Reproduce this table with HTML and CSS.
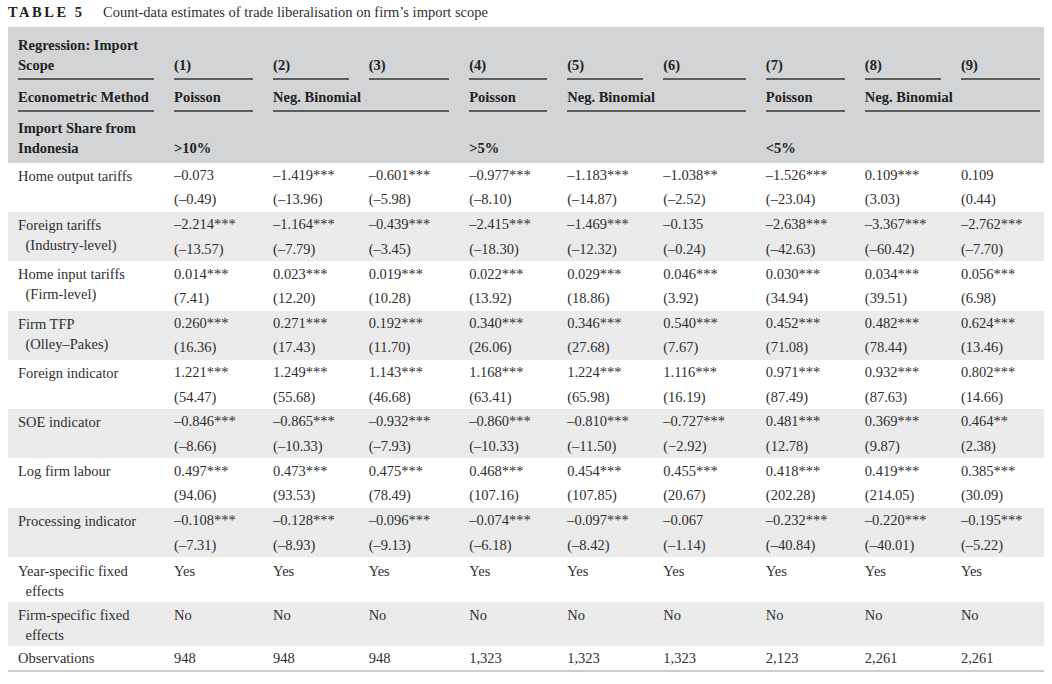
FILE: index.html
```html
<!DOCTYPE html>
<html lang="en">
<head>
<meta charset="utf-8">
<title>Table 5</title>
<link rel="stylesheet" href="styles.css">
</head>
<body>
<div class="page">
  <div class="caption"><span class="tag">TABLE 5</span><span class="ctext">Count-data estimates of trade liberalisation on firm’s import scope</span></div>
  <table class="est">
    <colgroup>
      <col class="c-lab"><col class="c1"><col class="c2"><col class="c3"><col class="c4"><col class="c5"><col class="c6"><col class="c7"><col class="c8"><col class="c9">
    </colgroup>
    <thead>
      <tr class="h1">
        <th><div class="rule">Regression: Import<br>Scope</div></th>
        <th><div class="rule">(1)</div></th>
        <th><div class="rule">(2)</div></th>
        <th><div class="rule">(3)</div></th>
        <th><div class="rule">(4)</div></th>
        <th><div class="rule">(5)</div></th>
        <th><div class="rule">(6)</div></th>
        <th><div class="rule">(7)</div></th>
        <th><div class="rule">(8)</div></th>
        <th class="last"><div class="rule">(9)</div></th>
      </tr>
      <tr class="h2">
        <th><div class="rule">Econometric Method</div></th>
        <th><div class="rule">Poisson</div></th>
        <th colspan="2"><div class="rule">Neg. Binomial</div></th>
        <th><div class="rule">Poisson</div></th>
        <th colspan="2"><div class="rule">Neg. Binomial</div></th>
        <th><div class="rule">Poisson</div></th>
        <th colspan="2" class="last"><div class="rule">Neg. Binomial</div></th>
      </tr>
      <tr class="h3">
        <th><div class="plain">Import Share from<br>Indonesia</div></th>
        <th><div class="plain">&gt;10%</div></th>
        <th></th>
        <th></th>
        <th><div class="plain">&gt;5%</div></th>
        <th></th>
        <th></th>
        <th><div class="plain">&lt;5%</div></th>
        <th></th>
        <th class="last"></th>
      </tr>
    </thead>
    <tbody>
      <tr>
        <td class="lab">Home output tariffs</td>
        <td>–0.073<br>(–0.49)</td>
        <td>–1.419***<br>(–13.96)</td>
        <td>–0.601***<br>(–5.98)</td>
        <td>–0.977***<br>(–8.10)</td>
        <td>–1.183***<br>(–14.87)</td>
        <td>–1.038**<br>(–2.52)</td>
        <td>–1.526***<br>(–23.04)</td>
        <td>0.109***<br>(3.03)</td>
        <td class="last">0.109<br>(0.44)</td>
      </tr>
      <tr class="alt">
        <td class="lab">Foreign tariffs<span class="sub">(Industry-level)</span></td>
        <td>–2.214***<br>(–13.57)</td>
        <td>–1.164***<br>(–7.79)</td>
        <td>–0.439***<br>(–3.45)</td>
        <td>–2.415***<br>(–18.30)</td>
        <td>–1.469***<br>(–12.32)</td>
        <td>–0.135<br>(–0.24)</td>
        <td>–2.638***<br>(–42.63)</td>
        <td>–3.367***<br>(–60.42)</td>
        <td class="last">–2.762***<br>(–7.70)</td>
      </tr>
      <tr>
        <td class="lab">Home input tariffs<span class="sub">(Firm-level)</span></td>
        <td>0.014***<br>(7.41)</td>
        <td>0.023***<br>(12.20)</td>
        <td>0.019***<br>(10.28)</td>
        <td>0.022***<br>(13.92)</td>
        <td>0.029***<br>(18.86)</td>
        <td>0.046***<br>(3.92)</td>
        <td>0.030***<br>(34.94)</td>
        <td>0.034***<br>(39.51)</td>
        <td class="last">0.056***<br>(6.98)</td>
      </tr>
      <tr class="alt">
        <td class="lab">Firm TFP<span class="sub">(Olley–Pakes)</span></td>
        <td>0.260***<br>(16.36)</td>
        <td>0.271***<br>(17.43)</td>
        <td>0.192***<br>(11.70)</td>
        <td>0.340***<br>(26.06)</td>
        <td>0.346***<br>(27.68)</td>
        <td>0.540***<br>(7.67)</td>
        <td>0.452***<br>(71.08)</td>
        <td>0.482***<br>(78.44)</td>
        <td class="last">0.624***<br>(13.46)</td>
      </tr>
      <tr>
        <td class="lab">Foreign indicator</td>
        <td>1.221***<br>(54.47)</td>
        <td>1.249***<br>(55.68)</td>
        <td>1.143***<br>(46.68)</td>
        <td>1.168***<br>(63.41)</td>
        <td>1.224***<br>(65.98)</td>
        <td>1.116***<br>(16.19)</td>
        <td>0.971***<br>(87.49)</td>
        <td>0.932***<br>(87.63)</td>
        <td class="last">0.802***<br>(14.66)</td>
      </tr>
      <tr class="alt">
        <td class="lab">SOE indicator</td>
        <td>–0.846***<br>(–8.66)</td>
        <td>–0.865***<br>(–10.33)</td>
        <td>–0.932***<br>(–7.93)</td>
        <td>–0.860***<br>(–10.33)</td>
        <td>–0.810***<br>(–11.50)</td>
        <td>–0.727***<br>(−2.92)</td>
        <td>0.481***<br>(12.78)</td>
        <td>0.369***<br>(9.87)</td>
        <td class="last">0.464**<br>(2.38)</td>
      </tr>
      <tr>
        <td class="lab">Log firm labour</td>
        <td>0.497***<br>(94.06)</td>
        <td>0.473***<br>(93.53)</td>
        <td>0.475***<br>(78.49)</td>
        <td>0.468***<br>(107.16)</td>
        <td>0.454***<br>(107.85)</td>
        <td>0.455***<br>(20.67)</td>
        <td>0.418***<br>(202.28)</td>
        <td>0.419***<br>(214.05)</td>
        <td class="last">0.385***<br>(30.09)</td>
      </tr>
      <tr class="alt">
        <td class="lab">Processing indicator</td>
        <td>–0.108***<br>(–7.31)</td>
        <td>–0.128***<br>(–8.93)</td>
        <td>–0.096***<br>(–9.13)</td>
        <td>–0.074***<br>(–6.18)</td>
        <td>–0.097***<br>(–8.42)</td>
        <td>–0.067<br>(–1.14)</td>
        <td>–0.232***<br>(–40.84)</td>
        <td>–0.220***<br>(–40.01)</td>
        <td class="last">–0.195***<br>(–5.22)</td>
      </tr>
      <tr class="fx">
        <td class="lab">Year-specific fixed<span class="sub">effects</span></td>
        <td>Yes</td><td>Yes</td><td>Yes</td><td>Yes</td><td>Yes</td><td>Yes</td><td>Yes</td><td>Yes</td><td class="last">Yes</td>
      </tr>
      <tr class="fx alt">
        <td class="lab">Firm-specific fixed<span class="sub">effects</span></td>
        <td>No</td><td>No</td><td>No</td><td>No</td><td>No</td><td>No</td><td>No</td><td>No</td><td class="last">No</td>
      </tr>
      <tr class="obs">
        <td class="lab">Observations</td>
        <td>948</td><td>948</td><td>948</td><td>1,323</td><td>1,323</td><td>1,323</td><td>2,123</td><td>2,261</td><td class="last">2,261</td>
      </tr>
    </tbody>
  </table>
</div>
</body>
</html>
```
FILE: styles.css
```css
html, body {
  margin: 0;
  padding: 0;
  background: #ffffff;
}

body {
  font-family: "Liberation Serif", "Times New Roman", serif;
  color: #2f2f2f;
}

.page {
  padding: 4px 8px 0 8px;
}

.caption {
  font-size: 14.5px;
  line-height: 16px;
  height: 16px;
  margin-bottom: 7.3px;
  white-space: nowrap;
}

.caption .tag {
  font-weight: bold;
  letter-spacing: 2.5px;
  margin-right: 18.5px;
  color: #222222;
}

.est {
  width: 1036px;
  table-layout: fixed;
  border-collapse: separate;
  border-spacing: 0;
  font-size: 14.5px;
}

.c-lab { width: 156px; }
.c1 { width: 99px; }
.c2 { width: 95.5px; }
.c3 { width: 100.5px; }
.c4 { width: 98px; }
.c5 { width: 96px; }
.c6 { width: 102.5px; }
.c7 { width: 99px; }
.c8 { width: 96px; }
.c9 { width: 93px; }

thead tr {
  background: #d3d4d6;
}

thead th {
  font-weight: bold;
  text-align: left;
  vertical-align: bottom;
  padding: 0 10px;
  color: #222222;
}

thead th.last {
  padding-right: 4px;
}

.h1 th { padding-top: 8px; }
.h2 th { padding-top: 6.4px; }
.h3 th { padding-top: 6.3px; padding-bottom: 4.4px; }

.rule {
  line-height: 20px;
  padding-bottom: 3px;
  border-bottom: 2px solid #5e5e5e;
}

.h2 .rule {
  padding-bottom: 3.3px;
}

.plain {
  line-height: 20px;
}

tbody td {
  text-align: left;
  vertical-align: top;
  padding: 0.3px 10px 0 10px;
  line-height: 24.5px;
  white-space: nowrap;
}

tbody td.last {
  padding-right: 4px;
}

tbody td.lab {
  padding-top: 3px;
  line-height: 20px;
}

.sub {
  display: block;
  padding-left: 7.5px;
}

tbody tr.alt {
  background: #ebebec;
}

tbody tr.fx td {
  line-height: 20px;
  padding-top: 3.5px;
  padding-bottom: 1px;
}

tbody tr.obs td {
  line-height: 20px;
  padding-top: 2px;
  padding-bottom: 2px;
  border-bottom: 2px solid #cbcbcb;
}
```
